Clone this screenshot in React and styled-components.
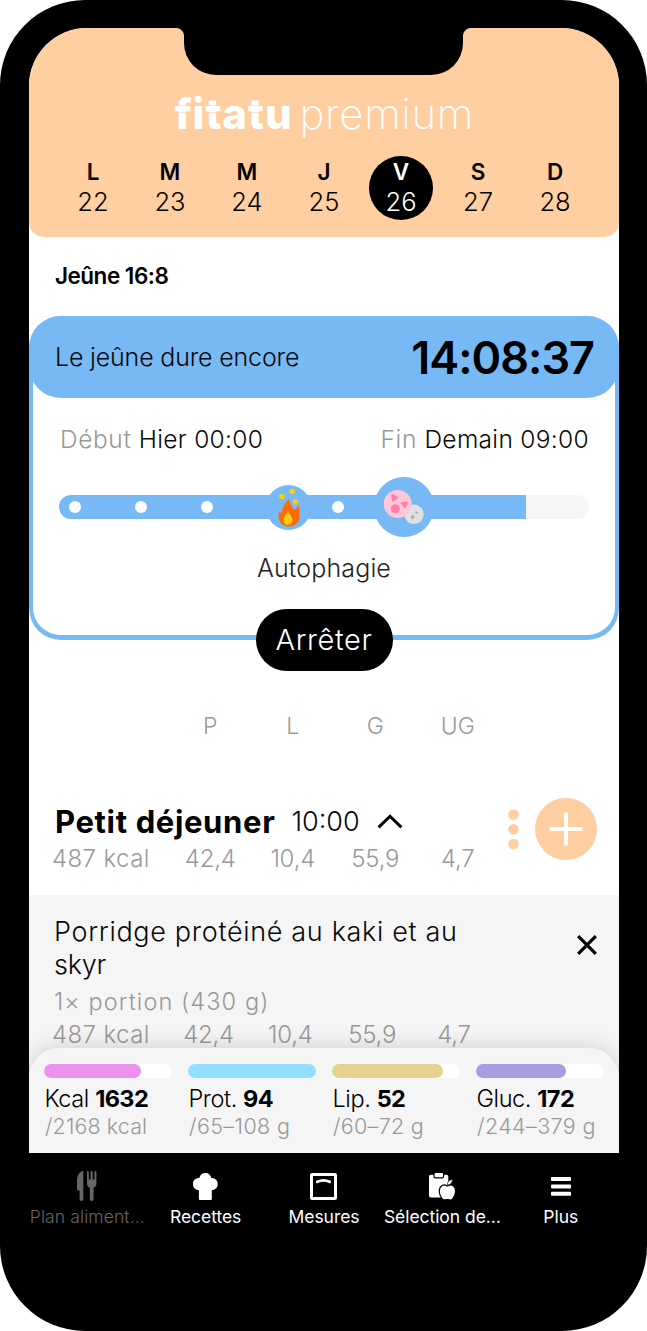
import React from "react";
import styled, { createGlobalStyle } from 'styled-components'

const colors = {
  peach: '#ffcfa2',
  blue: '#76b9f5',
  panel: '#f5f5f5',
  muted: '#999',
  text: '#080808',
}

const DAYS = [
  ['L', 22], ['M', 23], ['M', 24], ['J', 25], ['V', 26], ['S', 27], ['D', 28]
]
const STAGES = [75, 140.5, 206.5, 338]
const MACROS = [
  { name: 'Kcal', value: '1632', goal: '/2168 kcal', fill: 75.5, color: '#ea92ee', spacing: 0.1 },
  { name: 'Prot.', value: '94', goal: '/65–108 g', fill: 100, color: '#94dfff', spacing: 0.4 },
  { name: 'Lip.', value: '52', goal: '/60–72 g', fill: 87, color: '#e3d38f', spacing: 0.3 },
  { name: 'Gluc.', value: '172', goal: '/244–379 g', fill: 70.5, color: '#aa9ce2', spacing: 0.4 },
]

export default function App() {
  return (
    <>
      <GlobalStyle />
      <Phone>
        <Screen>
          <Header>
            <Notch />
            <Logo>
              <Brand><Cut>f</Cut>i<Cut>t</Cut>a<Cut>t</Cut>u</Brand>
              <Premium>premium</Premium>
            </Logo>
            <Week>
              {DAYS.map(([letter, number]) => (
                <Day key={number} $active={number === 26}>
                  <DayLetter>{letter}</DayLetter>
                  <DayNumber>{number}</DayNumber>
                </Day>
              ))}
            </Week>
          </Header>
          <FastTitle>Jeûne 16:8</FastTitle>
          <FastCard>
            <Banner>
              <BannerLabel>Le jeûne dure encore</BannerLabel>
              <Timer>14:08:37</Timer>
            </Banner>
            <Times>
              <Time><Muted>Début</Muted><span>Hier 00:00</span></Time>
              <Time><Muted>Fin</Muted><span>Demain 09:00</span></Time>
            </Times>
            <Timeline>
              <Track><TrackFill /></Track>
              {STAGES.map(x => <StageDot key={x} $x={x} />)}
              <StageBadge $x={288.5} $size={45}><FireIcon /></StageBadge>
              <StageBadge $x={404} $size={60}><CellsIcon /></StageBadge>
            </Timeline>
            <StageName>Autophagie</StageName>
          </FastCard>
          <StopButton>Arrêter</StopButton>
          <ColumnNames>
            <span /><span>P</span><span>L</span><span>G</span><span>UG</span>
          </ColumnNames>
          <Meal>
            <MealInfo>
              <MealLine>
                <MealName>Petit déjeuner</MealName>
                <MealTime>10:00</MealTime>
                <ChevronIcon />
              </MealLine>
              <Values $first={140} $step={82.5} $height={36}>
                <Energy>487 kcal</Energy>
                <span>42,4</span><span>10,4</span><span>55,9</span><span>4,7</span>
              </Values>
            </MealInfo>
            <MoreIcon />
            <AddButton><PlusIcon /></AddButton>
          </Meal>
          <Dish>
            <DishTop>
              <DishName>Porridge protéiné au kaki et au <Tight>skyr</Tight></DishName>
              <CloseIcon />
            </DishTop>
            <Portion>1× portion (430 g)</Portion>
            <Values $first={138.7} $step={81.8} $height={26}>
              <Energy>487 kcal</Energy>
              <span>42,4</span><span>10,4</span><span>55,9</span><span>4,7</span>
            </Values>
          </Dish>
          <Summary>
            {MACROS.map(macro => (
              <Macro key={macro.name}>
                <Bar><BarFill style={{ width: `${macro.fill}%` }} $color={macro.color} /></Bar>
                <MacroName>{macro.name} <b>{macro.value}</b></MacroName>
                <MacroGoal $spacing={macro.spacing}>{macro.goal}</MacroGoal>
              </Macro>
            ))}
          </Summary>
        </Screen>
        <Nav>
          <NavItem $muted><NavIcon><CutleryIcon /></NavIcon>Plan aliment…</NavItem>
          <NavItem><NavIcon><ChefIcon /></NavIcon>Recettes</NavItem>
          <NavItem><NavIcon><ScaleIcon /></NavIcon>Mesures</NavItem>
          <NavItem><NavIcon><ClipboardIcon /></NavIcon>Sélection de…</NavItem>
          <NavItem><NavIcon><MenuIcon /></NavIcon>Plus</NavItem>
        </Nav>
      </Phone>
    </>
  );
}

const FireIcon = () => (
  <svg width="45" height="45" viewBox="0 0 45 45">
    <circle cx="15.9" cy="11.5" r="2.8" fill="#ffcc0a" />
    <circle cx="26.2" cy="6.5" r="2.8" fill="#ffcc0a" />
    <circle cx="29.6" cy="16.8" r="2.8" fill="#ffcc0a" />
    <path fill="#ff6a00" d="M22.7 13.8C23.6 18 25.8 21.5 27.8 24.6C29.8 24.2 32 22.5 33.3 20.6C32.6 24 33.8 27.5 33.6 31.5C33.4 37.5 28.5 41.5 23 41.5C17 41.5 12.6 37.2 12.6 31.5C12.6 29.5 12.9 28 13.6 26.6C14.4 27.6 15.2 28.2 16 28.4C15.6 22.5 19.5 17.8 22.7 13.8Z" />
    <path fill="#ffcc0a" d="M22 25.5C23 29 26.4 31.5 26.4 35.2C26.4 38 24.3 39.8 21.8 39.8C19.2 39.8 17.3 38 17.3 35.2C17.3 31.5 21 29 22 25.5Z" />
  </svg>
)

const CellsIcon = () => (
  <svg width="60" height="60" viewBox="0 0 60 60">
    <circle cx="40" cy="37.3" r="9.7" fill="#e1e1e1" />
    <circle cx="38.7" cy="40" r="2" fill="#b0b0b0" />
    <path d="M41.3 34L44.7 35.7L41.7 37.3Z" fill="#b0b0b0" />
    <circle cx="23.7" cy="27" r="14" fill="#ffc6da" />
    <g fill="#ff7fa9" stroke="#ff7fa9" strokeLinejoin="round">
      <circle cx="21.3" cy="31.7" r="4" />
      <path d="M17.8 17.2L24.3 20.5L18.6 24.3Z" />
      <path d="M26.8 26L33.5 25.1L30.9 31Z" />
    </g>
  </svg>
)

const ChevronIcon = () => (
  <svg width="26" height="15" viewBox="0 0 26 15" fill="none" stroke="#000" strokeWidth="2.9">
    <path d="M1.6 13.4L13 2.2L24.4 13.4" />
  </svg>
)

const MoreIcon = () => (
  <svg width="12" height="62" viewBox="0 0 12 62" fill={colors.peach}>
    <circle cx="5.5" cy="16.6" r="5.3" />
    <circle cx="5.5" cy="31.3" r="5.3" />
    <circle cx="5.5" cy="46" r="5.3" />
  </svg>
)

const PlusIcon = () => (
  <svg width="34" height="34" viewBox="0 0 34 34" stroke="#fff" strokeWidth="3.8">
    <path d="M17 0.5V33.5M0.5 17H33.5" />
  </svg>
)

const CloseIcon = () => (
  <svg width="20" height="20" viewBox="0 0 20 20" stroke="#000" strokeWidth="3.2">
    <path d="M1.2 1.2L18.8 18.8M18.8 1.2L1.2 18.8" />
  </svg>
)

const CutleryIcon = () => (
  <svg width="20" height="30" viewBox="0 0 20 30" fill="currentColor">
    <path d="M6.3 0V28.6Q6.3 30 4.5 30T2.6 28.6V19.6H1.2Q0 19.6 0 18.3V10.5C0 4.5 2.2 0.4 6.3 0Z" />
    <path d="M10 1Q10 0 10.9 0T11.8 1V8.6H13.5V1Q13.5 0 14.6 0T15.7 1V8.6H17.4V1Q17.4 0 18.4 0T19.4 1V12.8C19.4 14.8 18.2 16.2 16.6 16.8V28.6Q16.6 30 14.7 30T12.8 28.6V16.8C11.2 16.2 10 14.8 10 12.8Z" />
  </svg>
)

const ChefIcon = () => (
  <svg width="25" height="27" viewBox="0 0 25 27" fill="currentColor">
    <path d="M5.9 26V17.2C2.3 16.8 0 14.5 0 11C0 7.4 2.6 5.1 6.3 5.1C7 1.9 9.2 0 12.4 0S17.7 1.9 18.4 5.1C22.1 5.1 24.7 7.4 24.7 11C24.7 14.5 22.4 16.8 18.8 17.2V26Q18.8 27 17.8 27H6.9Q5.9 27 5.9 26Z" />
  </svg>
)

const ScaleIcon = () => (
  <svg width="27" height="27" viewBox="0 0 27 27" fill="none" stroke="currentColor" strokeWidth="3">
    <rect x="1.5" y="1.5" width="24" height="24" rx="0.6" />
    <path d="M7.4 8.8Q13.5 5.8 19.6 8.8" strokeWidth="2.8" strokeLinecap="round" />
  </svg>
)

const ClipboardIcon = () => (
  <svg width="27" height="27" viewBox="0 0 27 27" fill="currentColor">
    <rect x="0" y="1.8" width="19.3" height="22.7" rx="1.8" />
    <rect x="5" y="-0.6" width="9.6" height="5.4" rx="1.4" stroke="#000" strokeWidth="1.2" />
    <path stroke="#000" strokeWidth="1.2" d="M18.4 13C20.3 12 22.2 11.5 24 12.6C27.1 14.3 27.1 19 25.6 22.4C24.4 25.3 22.4 27.4 20.4 26.9C19 26.5 17.9 26.5 16.6 26.9C14.4 27.3 12.4 25.4 11.2 22.4C9.7 19 9.9 14.3 13 12.6C14.8 11.5 16.7 12 18.4 13Z" />
    <path stroke="#000" strokeWidth="0.6" d="M18.2 12C18.2 9 20 6.8 23.5 6.6C23.5 9.8 21.6 12 18.2 12Z" />
  </svg>
)

const MenuIcon = () => (
  <svg width="20" height="19" viewBox="0 0 20 19" fill="currentColor">
    <rect y="0" width="20" height="4" rx="0.8" />
    <rect y="7.4" width="20" height="4" rx="0.8" />
    <rect y="14.8" width="20" height="4" rx="0.8" />
  </svg>
)

const GlobalStyle = createGlobalStyle`
  body {
    margin: 0;
    background: #fff;
    font-family: Inter, "Liberation Sans", sans-serif;
    font-weight: 300;
    color: ${colors.text};
  }
  svg {
    display: block;
    flex: none;
  }
`

const Phone = styled.div`
  box-sizing: border-box;
  width: 647px;
  height: 1331px;
  padding: 28px 28px 0 29px;
  border-radius: 85px;
  background: #000;
`

const Screen = styled.div`
  display: flex;
  flex-direction: column;
  height: 1125px;
  border-radius: 58px 58px 0 0;
  overflow: hidden;
  background: #fff;
`

const Header = styled.header`
  position: relative;
  box-sizing: border-box;
  height: 209px;
  padding: 61px 25px 0 25.5px;
  border-radius: 0 0 15px 15px;
  background: ${colors.peach};
`

/* the two pseudo elements round the notch into the top edge */
const Notch = styled.div`
  position: absolute;
  top: 0;
  left: 155px;
  width: 279px;
  height: 47px;
  border-radius: 0 0 32px 32px;
  background: #000;
  &::before, &::after {
    content: '';
    position: absolute;
    top: 0;
    width: 8px;
    height: 8px;
  }
  &::before {
    right: 100%;
    background: radial-gradient(circle at 0 100%, transparent 7.5px, #000 8.5px);
  }
  &::after {
    left: 100%;
    background: radial-gradient(circle at 100% 100%, transparent 7.5px, #000 8.5px);
  }
`

const Logo = styled.div`
  display: flex;
  gap: 7px;
  padding-left: 120px;
  line-height: 50px;
  font-size: 42px;
  color: #fff;
`

const Brand = styled.span`
  font-weight: 800;
  letter-spacing: 0.9px;
`

const Cut = styled.span`
  position: relative;
  &::after {
    content: '';
    position: absolute;
    left: 0;
    right: 0;
    top: 17px;
    height: 6px;
    border: solid ${colors.peach};
    border-width: 1px 0;
    opacity: 0.6;
  }
`

const Premium = styled.span`
  font-weight: 200;
  letter-spacing: 0.65px;
`

const Week = styled.div`
  display: grid;
  grid-template-columns: repeat(7, 77px);
  justify-items: center;
  margin-top: 17px;
`

const Day = styled.div`
  box-sizing: border-box;
  width: 64px;
  height: 64px;
  padding-top: 1px;
  border-radius: 50%;
  line-height: 30px;
  text-align: center;
  background: ${props => props.$active ? '#000' : 'transparent'};
  color: ${props => props.$active ? '#fff' : '#000'};
`

const DayLetter = styled.div`
  font-size: 22.5px;
  font-weight: 600;
`

const DayNumber = styled.div`
  font-size: 25.5px;
`

const FastTitle = styled.h2`
  margin: 0;
  height: 79px;
  padding-left: 26px;
  line-height: 77px;
  font-size: 22.5px;
  font-weight: 600;
  letter-spacing: -0.5px;
  color: #000;
`

const FastCard = styled.section`
  box-sizing: border-box;
  height: 324px;
  border: solid ${colors.blue};
  border-width: 0 4px 5px;
  border-radius: 32px;
`

const Banner = styled.div`
  display: flex;
  align-items: center;
  justify-content: space-between;
  height: 82px;
  margin: 0 -4px;
  padding: 0 25px 0 26px;
  border-radius: 32px;
  background: ${colors.blue};
`

const BannerLabel = styled.span`
  font-size: 25px;
  letter-spacing: -0.18px;
`

const Timer = styled.span`
  font-size: 45px;
  font-weight: 600;
  letter-spacing: -1px;
  color: #000;
`

const Times = styled.div`
  display: flex;
  justify-content: space-between;
  height: 79px;
  padding: 0 26px 0 27px;
  line-height: 82px;
  font-size: 24.5px;
  letter-spacing: 0.32px;
`

const Time = styled.div`
  display: flex;
  gap: 7.5px;
`

const Muted = styled.span`
  color: ${colors.muted};
  letter-spacing: 0.6px;
`

const Timeline = styled.div`
  position: relative;
  display: flex;
  align-items: center;
  height: 60px;
  padding: 0 26px;
`

const Track = styled.div`
  flex: 1;
  height: 24px;
  border-radius: 12px;
  overflow: hidden;
  background: ${colors.panel};
`

const TrackFill = styled.div`
  width: 467px;
  height: 100%;
  background: ${colors.blue};
`

const StageDot = styled.div`
  position: absolute;
  left: ${props => props.$x - 39}px;
  width: 12px;
  height: 12px;
  border-radius: 50%;
  background: #fff;
`

const StageBadge = styled.div`
  position: absolute;
  left: ${props => props.$x - 33 - props.$size / 2}px;
  width: ${props => props.$size}px;
  height: ${props => props.$size}px;
  border-radius: 50%;
  background: ${colors.blue};
`

const StageName = styled.div`
  line-height: 62px;
  text-align: center;
  font-size: 25px;
  letter-spacing: 0.15px;
  color: #222;
`

const StopButton = styled.button`
  position: relative;
  align-self: center;
  flex: none;
  width: 137px;
  height: 62px;
  margin-top: -31px;
  padding: 0 0 2px;
  border: 0;
  border-radius: 31px;
  background: #000;
  color: #fff;
  font: 300 29px Inter, "Liberation Sans", sans-serif;
  letter-spacing: 0.6px;
`

const ColumnNames = styled.div`
  display: grid;
  grid-template-columns: 140px repeat(4, 82.5px);
  flex: none;
  height: 109px;
  line-height: 111px;
  text-align: center;
  font-size: 23px;
  color: ${colors.muted};
`

const Meal = styled.div`
  box-sizing: border-box;
  display: flex;
  flex: none;
  height: 115px;
  padding-top: 18px;
`

const MealInfo = styled.div`
  width: 479px;
  padding-top: 3px;
`

const MealLine = styled.div`
  display: flex;
  align-items: center;
  height: 40px;
  padding-left: 26px;
`

const MealName = styled.span`
  font-size: 31px;
  font-weight: 700;
  letter-spacing: 0.65px;
  color: #000;
`

const MealTime = styled.span`
  margin: 0 17px 0 16px;
  font-size: 27px;
`

const Values = styled.div`
  display: grid;
  grid-template-columns: ${props => props.$first}px repeat(4, ${props => props.$step}px);
  line-height: ${props => props.$height}px;
  text-align: center;
  font-size: 24px;
  letter-spacing: -0.2px;
  color: ${colors.muted};
`

const Energy = styled.span`
  padding-left: 23px;
  text-align: left;
  letter-spacing: 0.4px;
`

const AddButton = styled.div`
  display: flex;
  align-items: center;
  justify-content: center;
  width: 62px;
  height: 62px;
  margin-left: 15px;
  border-radius: 50%;
  background: ${colors.peach};
`

const Dish = styled.div`
  box-sizing: border-box;
  flex: none;
  height: 195px;
  padding-top: 20px;
  background: ${colors.panel};
`

const DishTop = styled.div`
  display: flex;
  align-items: center;
  justify-content: space-between;
  padding: 0 22px 0 25px;
  & > svg {
    margin-bottom: 7px;
  }
`

const DishName = styled.div`
  width: 430px;
  line-height: 33px;
  font-size: 27px;
  letter-spacing: 0.67px;
`

const Tight = styled.span`
  letter-spacing: -0.2px;
`

const Portion = styled.div`
  padding-left: 25px;
  line-height: 41px;
  font-size: 23.5px;
  letter-spacing: 1.1px;
  color: ${colors.muted};
`

const Summary = styled.div`
  position: relative;
  box-sizing: border-box;
  display: grid;
  grid-template-columns: repeat(4, 128px);
  column-gap: 16px;
  flex: none;
  height: 105px;
  margin-top: -42px;
  padding: 16px 0 0 15px;
  border-radius: 30px 30px 0 0;
  background: ${colors.panel};
  box-shadow: 0 0 22px rgba(0, 0, 0, 0.17);
`

const Macro = styled.div`
  white-space: nowrap;
`

const Bar = styled.div`
  height: 14px;
  margin-bottom: 7px;
  border-radius: 7px;
  background: #fff;
`

const BarFill = styled.div`
  height: 100%;
  border-radius: 7px;
  background: ${props => props.$color};
`

const MacroName = styled.div`
  padding-left: 0.5px;
  line-height: 28px;
  font-size: 23.5px;
  letter-spacing: -0.4px;
  color: #000;
  & b {
    font-weight: 700;
    letter-spacing: -0.6px;
  }
`

const MacroGoal = styled.div`
  padding-left: 1px;
  line-height: 27px;
  font-size: 21.5px;
  letter-spacing: ${props => props.$spacing}px;
  color: ${colors.muted};
`

const Nav = styled.nav`
  display: grid;
  grid-template-columns: repeat(5, 118.4px);
  margin-left: -1px;
  padding-top: 16px;
`

const NavItem = styled.div`
  text-align: center;
  white-space: nowrap;
  line-height: 27px;
  font-size: 17.5px;
  letter-spacing: ${props => props.$muted ? 0.1 : -0.05}px;
  font-weight: ${props => props.$muted ? 300 : 400};
  color: ${props => props.$muted ? '#666' : '#fff'};
`

const NavIcon = styled.div`
  display: flex;
  align-items: center;
  justify-content: center;
  height: 34px;
`
